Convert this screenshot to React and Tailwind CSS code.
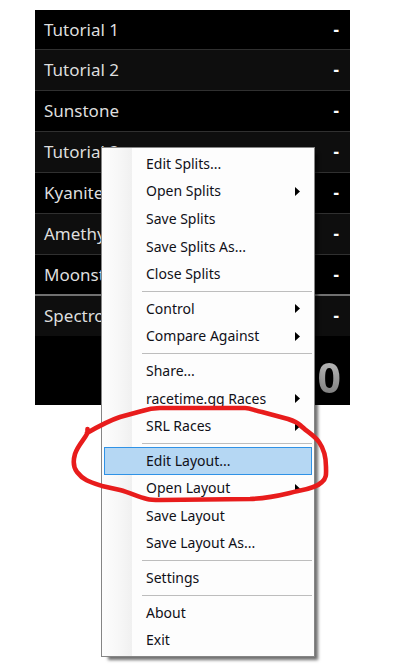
import React from "react";

const splits = [
  { name: "Tutorial 1", row: "bg-black leading-[39px]" },
  { name: "Tutorial 2", row: "bg-[#0e0e0e] border-t border-[#303030] leading-[40px]" },
  { name: "Sunstone", row: "bg-black border-t border-[#303030] leading-[40px]" },
  { name: "Tutorial 3", row: "bg-[#0e0e0e] border-t border-[#303030] leading-[40px]" },
  { name: "Kyanite", row: "bg-black border-t border-[#303030] leading-[40px]" },
  { name: "Amethyst", row: "bg-[#0e0e0e] border-t border-[#303030] leading-[40px]" },
  { name: "Moonstone", row: "bg-black border-t border-[#303030] leading-[39px]" },
  { name: "Spectrolite", row: "bg-[#0e0e0e] border-t-2 border-[#707070] leading-[40px]" },
];

const groups = [
  {
    height: "h-[138px]",
    items: [
      { label: "Edit Splits..." },
      { label: "Open Splits", sub: true },
      { label: "Save Splits" },
      { label: "Save Splits As..." },
      { label: "Close Splits" },
    ],
  },
  {
    height: "h-[55px]",
    items: [
      { label: "Control", sub: true },
      { label: "Compare Against", sub: true },
    ],
  },
  {
    height: "h-[83px]",
    items: [
      { label: "Share..." },
      { label: "racetime.gg Races", sub: true },
      { label: "SRL Races", sub: true },
    ],
  },
  {
    height: "h-[110px]",
    items: [
      { label: "Edit Layout...", active: true },
      { label: "Open Layout", sub: true },
      { label: "Save Layout" },
      { label: "Save Layout As..." },
    ],
  },
  { height: "h-[28px]", items: [{ label: "Settings" }] },
  { height: "h-[55px]", items: [{ label: "About" }, { label: "Exit" }] },
];

function SplitRow({ name, row }) {
  return (
    <li className={`flex justify-between pr-[11px] pl-[9px] text-[17px] ${row}`}>
      <span>{name}</span>
      <span className="font-bold text-white">-</span>
    </li>
  );
}

function MenuItem({ label, sub, active }) {
  return (
    <button
      type="button"
      role="menuitem"
      aria-haspopup={sub ? "menu" : undefined}
      className={`flex min-h-0 flex-1 items-center justify-between border pr-[11px] pl-[41px] text-left ${
        active ? "border-[#2f92e6] bg-[#b5d7f3]" : "border-transparent"
      }`}
    >
      <span>{label}</span>
      {sub && (
        <svg width="5" height="9" viewBox="0 0 5 9" aria-hidden="true">
          <path d="M0 0 L5 4.5 L0 9 Z" fill="#000" />
        </svg>
      )}
    </button>
  );
}

function ContextMenu() {
  return (
    <div
      role="menu"
      aria-label="Splits menu"
      className="absolute top-[137px] right-[35px] left-[66px] border border-[#858585] bg-[#fdfdfd] bg-[linear-gradient(to_right,#fdfdfd,#f8f8f8_50%,#f0f0f0)] bg-[length:30px_100%] bg-no-repeat p-[2px] text-sm leading-5 text-[#101018] shadow-[5px_5px_3px_-2px_#00000090]"
    >
      {groups.map((group, index) => (
        <React.Fragment key={group.items[0].label}>
          {index > 0 && (
            <div role="separator" className="flex h-[7px] items-center pl-[38px]">
              <div className="h-px flex-1 bg-[#bdbdbd]" />
            </div>
          )}
          <div role="group" className={`flex flex-col ${group.height}`}>
            {group.items.map((item) => (
              <MenuItem key={item.label} {...item} />
            ))}
          </div>
        </React.Fragment>
      ))}
    </div>
  );
}

export default function App() {
  return (
    <main className="min-h-screen bg-white pt-[10px] pr-[52px] pl-[35px] font-['Noto_Sans','Open_Sans',sans-serif]">
      <div className="relative">
        <section aria-label="Splits" className="bg-black text-[#dedede]">
          <ul>
            {splits.map((split) => (
              <SplitRow key={split.name} {...split} />
            ))}
          </ul>
          <div className="flex h-[69px] items-center justify-end pt-[12px] pr-[9px] text-[41px] leading-[54px] font-bold">
            <span className="bg-linear-to-b from-[#cccccc] to-[#707070] bg-clip-text text-transparent">0</span>
          </div>
        </section>
        <ContextMenu />
        <svg
          className="pointer-events-none absolute top-[390px] left-[30px]"
          width="270"
          height="110"
          viewBox="65 400 270 110"
          fill="none"
          aria-hidden="true"
        >
          <path
            d="M87.5 429 V433 C84 440 78 445 75 454 C73 461 73 467 77 472 C83 480 90 482 102 486 L120 490 C131 493 138 497 147 499 C151 500 154 500 160 500 L250 499 C273 498 284 494 298 491 C309 489 317 487 322 482 C327 478 326 473 326 467 C326 458 324 449 319 442 C315 436 306 431 300 425 C297 422 294 421 288 419 L262 412 C255 411 251 408 245 408 H160 C152 408 148 409 142 411 L120 417 C108 421 99 426 87 433"
            stroke="#e81c1c"
            strokeWidth="4.6"
            strokeLinecap="round"
            strokeLinejoin="round"
          />
        </svg>
      </div>
    </main>
  );
}
